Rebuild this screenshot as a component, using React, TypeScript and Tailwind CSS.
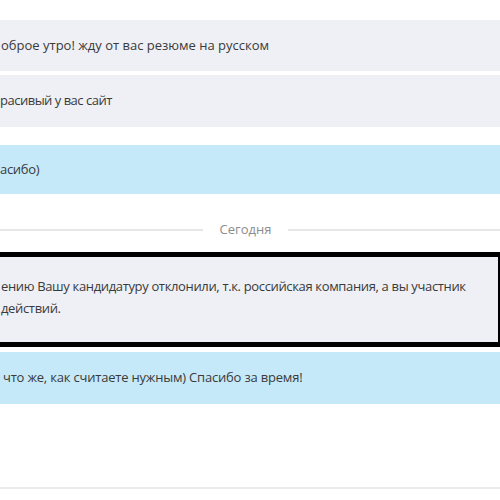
export default function App() {
  const font = { fontFamily: '"Open Sans", "Noto Sans", sans-serif' }
  return (
    <div
      className="w-[500px] h-[500px] bg-white overflow-hidden flex flex-col text-[13px] text-[#3a3a3a]"
      style={font}
    >
      <div className="h-[20px] shrink-0" />
      <div className="h-[51px] shrink-0 bg-[#eef0f5] flex items-center pl-[1px]">
        оброе утро! жду от вас резюме на русском
      </div>
      <div className="h-[4px] shrink-0" />
      <div className="h-[52px] shrink-0 bg-[#eef0f5] flex items-center tracking-[-0.5px]">
        расивый у вас сайт
      </div>
      <div className="h-[18px] shrink-0" />
      <div className="h-[49px] shrink-0 bg-[#c6e9f9] flex items-center tracking-[-0.3px]">
        асибо)
      </div>
      <div className="h-[58px] shrink-0 flex items-center pt-[14px]">
        <div className="w-[203px] h-[2px] bg-[#e6e6e6]" />
        <span className="flex-1 text-center text-[#8c8c8c] text-[13px]">Сегодня</span>
        <div className="w-[212px] h-[2px] bg-[#e6e6e6]" />
      </div>
      <div className="h-[95px] shrink-0 border-y-[5px] border-r-[2px] border-black bg-[#eef0f5] pt-[18px] leading-[22px] pl-[1px] tracking-[-0.35px]">
        <div>ению Вашу кандидатуру отклонили, т.к. российская компания, а вы участник</div>
        <div>действий.</div>
      </div>
      <div className="h-[5px] shrink-0" />
      <div className="h-[52px] shrink-0 bg-[#c6e9f9] flex items-center pl-[3px] tracking-[-0.2px]">
        что же, как считаете нужным) Спасибо за время!
      </div>
      <div className="h-[83px] shrink-0" />
      <div className="h-[2px] shrink-0 bg-[#ececec]" />
    </div>
  )
}
